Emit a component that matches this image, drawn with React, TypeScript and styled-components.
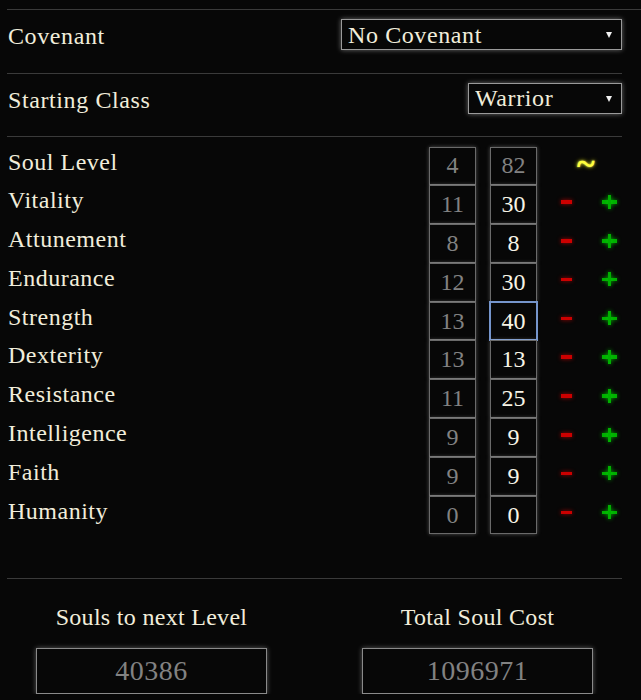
import { useEffect, useRef } from 'react';
import styled, { createGlobalStyle } from 'styled-components';

const GlobalStyle = createGlobalStyle`
  html, body {
    margin: 0;
    background: #070707;
  }
`

const serif = `"Liberation Serif", "Times New Roman", serif`

type Stat = { name: string; base: number; value: number; fixed?: boolean; active?: boolean }

const stats: Stat[] = [
  { name: 'Soul Level', base: 4, value: 82, fixed: true },
  { name: 'Vitality', base: 11, value: 30 },
  { name: 'Attunement', base: 8, value: 8 },
  { name: 'Endurance', base: 12, value: 30 },
  { name: 'Strength', base: 13, value: 40, active: true },
  { name: 'Dexterity', base: 13, value: 13 },
  { name: 'Resistance', base: 11, value: 25 },
  { name: 'Intelligence', base: 9, value: 9 },
  { name: 'Faith', base: 9, value: 9 },
  { name: 'Humanity', base: 0, value: 0 },
]

export default function App() {
  const activeRef = useRef<HTMLInputElement>(null);

  useEffect(() => {
    const el = activeRef.current;
    if (el) {
      el.focus();
      el.setSelectionRange(1, 1);
    }
  }, []);

  return (
    <Page>
      <GlobalStyle />
      <Panel>
        <Sheet>
          <OptionRow>
            <Label>Covenant</Label>
            <SelectWrap>
              <Select $width={281} defaultValue="none">
                <option value="none">No Covenant</option>
                <option value="way">Way of White</option>
                <option value="sun">Warrior of Sunlight</option>
              </Select>
              <Arrow />
            </SelectWrap>
          </OptionRow>
          <OptionRow>
            <Label>Starting Class</Label>
            <SelectWrap>
              <Select $width={154} defaultValue="warrior">
                <option value="warrior">Warrior</option>
                <option value="knight">Knight</option>
                <option value="pyro">Pyromancer</option>
              </Select>
              <Arrow />
            </SelectWrap>
          </OptionRow>

          <StatTable>
            {stats.map((s) => (
              <StatRow key={s.name}>
                <StatName>{s.name}</StatName>
                <NumBox readOnly $dim value={s.base} />
                <NumBox
                  ref={s.active ? activeRef : undefined}
                  $dim={s.fixed}
                  $active={s.active}
                  readOnly={s.fixed}
                  defaultValue={s.value}
                />
                {s.fixed ? (
                  <Tilde>~</Tilde>
                ) : (
                  <>
                    <Sign $kind="minus" aria-label="decrease" />
                    <Sign $kind="plus" aria-label="increase" />
                  </>
                )}
              </StatRow>
            ))}
          </StatTable>

          <Summary>
            <SummaryCell>
              <SummaryTitle>Souls to next Level</SummaryTitle>
              <SummaryBox readOnly value="40386" />
            </SummaryCell>
            <SummaryCell>
              <SummaryTitle>Total Soul Cost</SummaryTitle>
              <SummaryBox readOnly value="1096971" />
            </SummaryCell>
          </Summary>
        </Sheet>
      </Panel>
    </Page>
  )
}

const Page = styled.div`
padding: 9px 0 0 7px;
font-family: ${serif};
color: #f1eddb;
`

const Panel = styled.div`
border-top: 1px solid #3a3a3a;
`

const Sheet = styled.div`
width: 615px;
`

const OptionRow = styled.div`
display: flex;
justify-content: space-between;
align-items: flex-start;
padding: 9px 0 22.5px;
border-bottom: 1px solid #3a3a3a;
`

const Label = styled.div`
height: 31px;
font-size: 24px;
line-height: 35px;
letter-spacing: 0.6px;
padding-left: 1px;
`

const SelectWrap = styled.div`
position: relative;
display: flex;
`

const Select = styled.select<{ $width: number }>`
appearance: none;
-webkit-appearance: none;
width: ${(p) => p.$width}px;
height: 31px;
padding: 0 20px 0 6px;
background: #070707;
color: #f1eddb;
border: 1px solid #9a9a9a;
border-radius: 0;
box-shadow: 0 0 5px rgba(230, 230, 230, 0.45);
font-family: ${serif};
font-size: 24px;
letter-spacing: 0.6px;
outline: none;
`

const Arrow = styled.span`
position: absolute;
right: 10px;
top: 13px;
width: 0;
height: 0;
border-left: 3.5px solid transparent;
border-right: 3.5px solid transparent;
border-top: 6px solid #f1f1f1;
pointer-events: none;
`

const StatTable = styled.div`
margin-top: 9.5px;
display: flex;
flex-direction: column;
`

const StatRow = styled.div`
display: grid;
grid-template-columns: 422px 61px 47px 59px 26px;
height: 38.8px;
`

const StatName = styled.div`
font-size: 24px;
line-height: 30px;
letter-spacing: 0.5px;
padding-left: 1px;
`

const NumBox = styled.input<{ $dim?: boolean; $active?: boolean }>`
box-sizing: border-box;
width: 47px;
height: 38.8px;
margin: 0;
padding: 0;
background: #070707;
border: 1px solid ${(p) => (p.$active ? '#7595cc' : '#6a6a6a')};
box-shadow: ${(p) =>
    p.$active
      ? '0 0 0 1px #7595cc'
      : '0 0 4px rgba(220, 220, 220, 0.35)'};
color: ${(p) => (p.$dim ? '#828282' : '#f7f4e6')};
caret-color: #f7f4e6;
font-family: ${serif};
font-size: 24px;
text-align: center;
outline: none;
border-radius: 0;
`

const Tilde = styled.div`
grid-column: span 2;
padding-left: 40px;
font-size: 34px;
font-weight: bold;
line-height: 33px;
color: #ffff3c;
text-shadow: 0 0 4px rgba(255, 255, 0, 0.8), 0 0 2px rgba(255, 255, 160, 0.9);
`

const Sign = styled.button<{ $kind: 'plus' | 'minus' }>`
position: relative;
justify-self: center;
margin-top: 9.5px;
width: ${(p) => (p.$kind === 'plus' ? 15 : 11)}px;
height: 14px;
padding: 0;
border: none;
background: transparent;
cursor: pointer;

&::before {
  content: '';
  position: absolute;
  left: 0;
  right: 0;
  top: 5.5px;
  height: 3.5px;
  background: ${(p) => (p.$kind === 'plus' ? '#00b000' : '#cc0000')};
  box-shadow: 0 0 4px ${(p) => (p.$kind === 'plus' ? 'rgba(0, 220, 0, 0.7)' : 'rgba(255, 0, 0, 0.6)')};
}

&::after {
  content: '';
  display: ${(p) => (p.$kind === 'plus' ? 'block' : 'none')};
  position: absolute;
  top: 0;
  bottom: 0;
  left: 6px;
  width: 3px;
  background: #00b000;
  box-shadow: 0 0 4px rgba(0, 220, 0, 0.7);
}
`

const Summary = styled.div`
margin-top: 44px;
border-top: 1px solid #3a3a3a;
padding: 23px 0 0 29px;
display: flex;
gap: 95px;
`

const SummaryCell = styled.div`
width: 231px;
display: flex;
flex-direction: column;
align-items: center;
gap: 16px;
`

const SummaryTitle = styled.div`
font-size: 24px;
line-height: 30px;
letter-spacing: 0.3px;
`

const SummaryBox = styled.input`
box-sizing: border-box;
width: 231px;
height: 46px;
margin: 0;
padding: 0;
background: #070707;
border: 1px solid #8a8a8a;
box-shadow: 0 0 5px rgba(220, 220, 220, 0.4);
color: #828282;
font-family: ${serif};
font-size: 28px;
letter-spacing: 0.5px;
text-align: center;
outline: none;
border-radius: 0;
`
